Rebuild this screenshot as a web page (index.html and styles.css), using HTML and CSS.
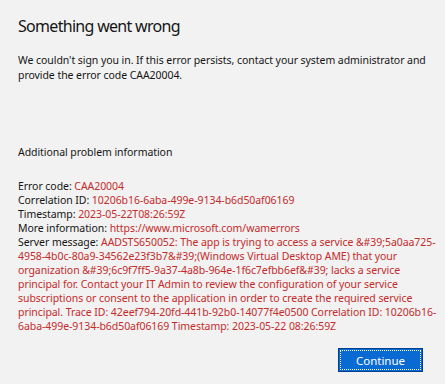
FILE: index.html
```html
<!DOCTYPE html>
<html lang="en">
<head>
  <meta charset="UTF-8">
  <meta name="viewport" content="width=device-width, initial-scale=1.0">
  <title>Something went wrong</title>
  <link rel="stylesheet" href="styles.css">
</head>
<body>
  <div class="page">
    <h1 class="title">Something went wrong</h1>
    <p class="intro">We couldn't sign you in. If this error persists, contact your system administrator and provide the error code CAA20004.</p>

    <h2 class="section">Additional problem information</h2>
    <div class="details">
      <div>Error code: <span class="val">CAA20004</span></div>
      <div>Correlation ID: <span class="val">10206b16-6aba-499e-9134-b6d50af06169</span></div>
      <div>Timestamp: <span class="val">2023-05-22T08:26:59Z</span></div>
      <div>More information: <span class="val">https://www.microsoft.com/wamerrors</span></div>
      <div class="message">Server message: <span class="val">AADSTS650052: The app is trying to access a service &amp;#39;5a0aa725-<br>4958-4b0c-80a9-34562e23f3b7&amp;#39;(Windows Virtual Desktop AME) that your<br>organization &amp;#39;6c9f7ff5-9a37-4a8b-964e-1f6c7efbb6ef&amp;#39; lacks a service<br>principal for. Contact your IT Admin to review the configuration of your service<br>subscriptions or consent to the application in order to create the required service<br>principal. Trace ID: 42eef794-20fd-441b-92b0-14077f4e0500 Correlation ID: 10206b16-<br>6aba-499e-9134-b6d50af06169 Timestamp: 2023-05-22 08:26:59Z</span></div>
    </div>

    <div class="actions">
      <button class="button">Continue</button>
    </div>
  </div>
</body>
</html>
```

FILE: styles.css
```css
html, body{
  margin: 0;
  background-color: #f2f2f2;
}
.page{
  padding: 13px 18px 0 18px;
  width: 409px;
  font-family: "Noto Sans", "Open Sans", sans-serif;
  font-size: 10.5px;
  letter-spacing: -0.06px;
  color: #151515;
}
.title{
  margin: 0;
  font-size: 16px;
  font-weight: 400;
  letter-spacing: -0.7px;
  line-height: 26px;
}
.intro{
  margin: 14px 0 0 0;
  line-height: 15px;
}
.section{
  margin: 62px 0 0 0;
  font-size: 10.5px;
  font-weight: 400;
  line-height: 15px;
}
.details{
  margin-top: 19px;
  line-height: 14px;
}
.details .message{
  white-space: nowrap;
}
.details .val{
  color: #c42b2b;
}
.actions{
  display: flex;
  justify-content: flex-end;
  margin-top: 15px;
  padding-right: 4px;
}
.button{
  width: 85px;
  height: 24px;
  padding: 0;
  font-family: inherit;
  font-size: 11.5px;
  color: #fff;
  background-color: #0a6ad4;
  border: 1px solid #003f94;
  outline: 1px dotted #fff;
  outline-offset: -3px;
}
```
